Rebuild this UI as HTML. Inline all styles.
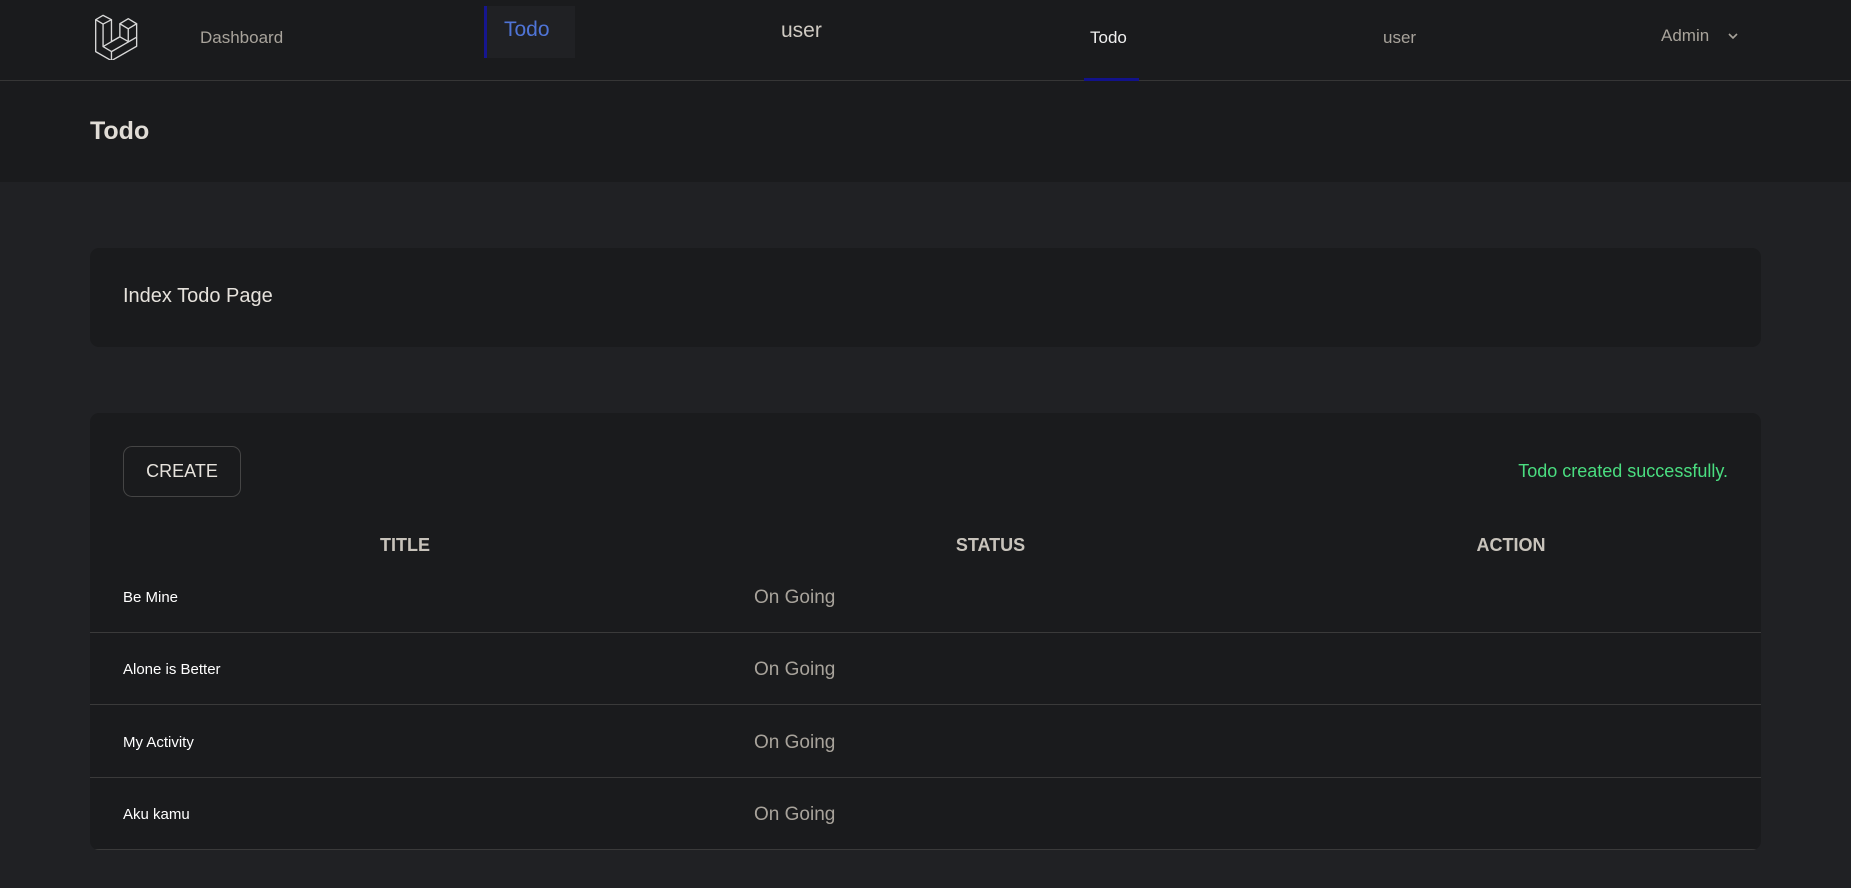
<!DOCTYPE html>
<html><head><meta charset="utf-8"><style>
*{box-sizing:border-box;margin:0;padding:0}
body{width:1851px;height:888px;background:#202124;font-family:"Liberation Sans",sans-serif;position:relative;overflow:hidden}
.abs{position:absolute;white-space:nowrap}
nav{position:absolute;left:0;top:0;width:1851px;height:81px;background:#1a1b1d;border-bottom:1px solid #363636}
.hdr{position:absolute;left:0;top:81px;width:1851px;height:101px;background:#1a1b1d}
.card{position:absolute;left:90px;width:1671px;background:#1a1b1d;border-radius:9px}
.row{position:absolute;left:0;width:1671px;height:72px;border-bottom:1px solid #3a3a3a}
.t{position:absolute;left:33px;top:28px;font-size:15px;color:#fff}
.s{position:absolute;left:664px;top:26px;font-size:19px;color:#a8a39b}
</style></head><body>
<nav>
<svg class="abs" style="left:93px;top:13px" width="47" height="47" viewBox="40 25 140 140" fill="none" stroke="#d8d8d8" stroke-width="4" stroke-linejoin="round">
<path d="M48 45 L70 32 L95 45 L70 58 Z"/>
<path d="M48 45 L48 140 L95 167 L170 124 L170 57"/>
<path d="M70 58 L70 125 L95 140 L170 97"/>
<path d="M95 45 L95 110 L120 96"/>
<path d="M120 57 L145 42 L170 57 L145 72 Z"/>
<path d="M120 57 L120 96 L145 110 M145 72 L145 110"/>
<path d="M70 125 L120 96 M95 140 L95 167"/>
</svg>
<div class="abs" style="left:200px;top:28px;font-size:17px;color:#a8a39b">Dashboard</div>
<div class="abs" style="left:484px;top:6px;width:91px;height:52px;background:#202124;border-left:3px solid #16168f"></div>
<div class="abs" style="left:504px;top:18px;font-size:21px;color:#4f74d6">Todo</div>
<div class="abs" style="left:781px;top:19px;font-size:21px;color:#cfcac2">user</div>
<div class="abs" style="left:1090px;top:28px;font-size:17px;color:#f0f0f0">Todo</div>
<div class="abs" style="left:1084px;top:78px;width:55px;height:3px;background:#12128a"></div>
<div class="abs" style="left:1383px;top:28px;font-size:17px;color:#a8a39b">user</div>
<div class="abs" style="left:1661px;top:26px;font-size:17px;color:#a8a39b">Admin</div>
<svg class="abs" style="left:1727px;top:31px" width="12" height="10" viewBox="0 0 12 10"><path d="M2 3 L6 7 L10 3" stroke="#a8a39b" stroke-width="1.6" fill="none"/></svg>
</nav>
<div class="hdr"><div class="abs" style="left:90px;top:36px;font-size:25px;font-weight:bold;color:#e0dcd6">Todo</div></div>
<div class="card" style="top:248px;height:99px"><div class="abs" style="left:33px;top:37px;font-size:20px;color:#e6e2dc">Index Todo Page</div></div>
<div class="card" style="top:413px;height:437px;overflow:hidden">
<div class="abs" style="left:33px;top:33px;width:118px;height:51px;border:1px solid #454545;border-radius:9px;font-size:18px;color:#e6e2dc;text-align:center;line-height:49px">CREATE</div>
<div class="abs" style="right:33px;top:48px;font-size:18px;color:#4ade80">Todo created successfully.</div>
<div class="abs" style="left:33px;top:122px;width:564px;text-align:center;font-size:18px;font-weight:bold;color:#c8c3bb">TITLE</div>
<div class="abs" style="left:597px;top:122px;width:607px;text-align:center;font-size:18px;font-weight:bold;color:#c8c3bb">STATUS</div>
<div class="abs" style="left:1204px;top:122px;width:434px;text-align:center;font-size:18px;font-weight:bold;color:#c8c3bb">ACTION</div>
<div class="row" style="top:148px"><div class="t">Be Mine</div><div class="s">On Going</div></div>
<div class="row" style="top:220px"><div class="t">Alone is Better</div><div class="s">On Going</div></div>
<div class="row" style="top:293px"><div class="t">My Activity</div><div class="s">On Going</div></div>
<div class="row" style="top:365px"><div class="t">Aku kamu</div><div class="s">On Going</div></div>
</div>
</body></html>
